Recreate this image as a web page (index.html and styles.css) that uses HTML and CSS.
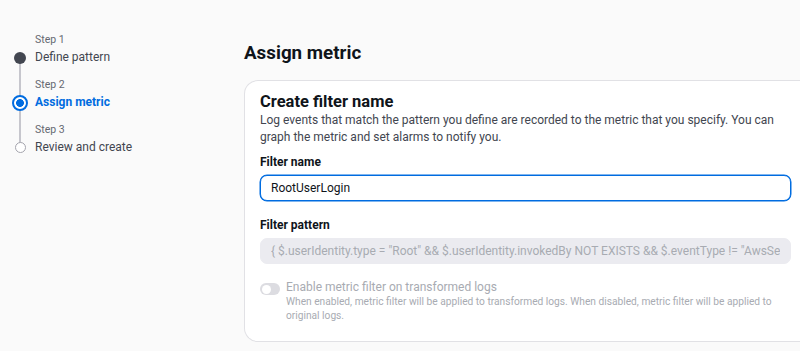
FILE: index.html
```html
<!DOCTYPE html>
<html lang="en">
<head>
    <meta charset="UTF-8">
    <title>Create metric filter</title>
    <link rel="stylesheet" href="styles.css">
</head>
<body>
    <div class="layout">
        <!-- Wizard steps -->
        <ul class="steps">
            <li class="step done">
                <span class="step-num">Step 1</span>
                <div class="step-row">
                    <span class="dot-wrap"><span class="dot"></span></span>
                    <span class="step-title">Define pattern</span>
                </div>
            </li>
            <li class="step active">
                <span class="step-num">Step 2</span>
                <div class="step-row">
                    <span class="dot-wrap"><span class="dot"></span></span>
                    <span class="step-title">Assign metric</span>
                </div>
            </li>
            <li class="step todo">
                <span class="step-num">Step 3</span>
                <div class="step-row">
                    <span class="dot-wrap"><span class="dot"></span></span>
                    <span class="step-title">Review and create</span>
                </div>
            </li>
        </ul>

        <div class="content">
            <h1>Assign metric</h1>

            <div class="card">
                <h2>Create filter name</h2>
                <p class="desc">Log events that match the pattern you define are recorded to the metric that you specify. You can graph the metric and set alarms to notify you.</p>

                <label for="filterName">Filter name</label>
                <input type="text" id="filterName" class="field focused" value="RootUserLogin">

                <label for="filterPattern">Filter pattern</label>
                <input type="text" id="filterPattern" class="field" disabled
                    value='{ $.userIdentity.type = "Root" &amp;&amp; $.userIdentity.invokedBy NOT EXISTS &amp;&amp; $.eventType != "AwsServiceEvent" }'>

                <div class="toggle-row">
                    <span class="toggle"><span class="knob"></span></span>
                    <div class="toggle-text">
                        <div class="toggle-label">Enable metric filter on transformed logs</div>
                        <div class="toggle-desc">When enabled, metric filter will be applied to transformed logs. When disabled, metric filter will be applied to original logs.</div>
                    </div>
                </div>
            </div>
        </div>
    </div>
</body>
</html>
```

FILE: styles.css
```css
body {
    font-family: Roboto, "Liberation Sans", sans-serif;
    background-color: #fafafa;
    color: #0f141a;
    margin: 0;
    overflow: hidden;
}

.layout {
    display: flex;
    height: 351px;
}

/* steps */
.steps {
    list-style: none;
    margin: 0;
    padding: 33px 0 0 12px;
    width: 232px;
    flex-shrink: 0;
}

.step {
    position: relative;
    height: 45px;
}

.step-num {
    display: block;
    font-size: 10.5px;
    line-height: 14px;
    color: #656871;
    padding-left: 23px;
    margin-bottom: 2px;
}

.step-row {
    display: flex;
    align-items: center;
    gap: 7px;
    height: 17px;
}

.step-title {
    font-size: 12px;
    line-height: 17px;
    color: #424650;
}

.dot-wrap {
    width: 16px;
    display: flex;
    justify-content: center;
    position: relative;
    z-index: 1;
}

.dot {
    width: 12px;
    height: 12px;
    border-radius: 50%;
    box-sizing: border-box;
}

.done .dot {
    background-color: #424650;
}

.active .dot {
    width: 16px;
    height: 16px;
    border: 2px solid #006ce0;
    background: radial-gradient(circle, #006ce0 0 3.6px, #ffffff 4.2px);
}

.active .step-title {
    color: #006ce0;
    font-weight: bold;
}

.todo .dot {
    width: 11px;
    height: 11px;
    border: 1.5px solid #a4a4ad;
    background-color: #ffffff;
}

/* connector between two steps */
.step:not(:last-child)::after {
    content: "";
    position: absolute;
    left: 7.25px;
    top: 30px;
    width: 1.5px;
    height: 36px;
    background-color: #c6c6cd;
}

/* main content */
.content {
    flex: 1;
    padding-top: 42px;
}

h1 {
    font-size: 18.8px;
    line-height: 22px;
    font-weight: bold;
    margin: 0 0 16px 0;
}

.card {
    background-color: #ffffff;
    border: 1px solid #e1e1e5;
    border-right: none;
    border-radius: 14px 0 0 14px;
    padding: 11px 9px 18px 15px;
}

h2 {
    font-size: 16.5px;
    line-height: 20px;
    font-weight: bold;
    margin: 0;
}

.desc {
    font-size: 12px;
    line-height: 17px;
    color: #424650;
    margin: 0 0 8px 0;
}

label {
    display: block;
    font-size: 12px;
    line-height: 17px;
    font-weight: bold;
    margin-bottom: 4px;
}

.field {
    display: block;
    width: 100%;
    box-sizing: border-box;
    height: 26px;
    font-family: inherit;
    font-size: 12px;
    padding: 0 10px;
    border: 1px solid #ebebf0;
    border-radius: 7px;
    margin-bottom: 16px;
    outline: none;
}

.field.focused {
    border: 1.5px solid #006ce0;
    box-shadow: 0 0 0 0.5px #006ce0;
    color: #0f141a;
}

.field:disabled {
    background-color: #ebebf0;
    color: #a8abb2;
    margin-bottom: 16px;
}

.toggle-row {
    display: flex;
    gap: 6px;
}

.toggle {
    width: 20px;
    height: 12px;
    border-radius: 6px;
    background-color: #dcdce1;
    position: relative;
    margin-top: 3px;
    flex-shrink: 0;
}

.knob {
    position: absolute;
    left: 1.5px;
    top: 1.5px;
    width: 9px;
    height: 9px;
    border-radius: 50%;
    background-color: #ffffff;
}

.toggle-text {
    flex: 1;
}

.toggle-label {
    font-size: 12px;
    line-height: 15px;
    color: #a8abb2;
}

.toggle-desc {
    font-size: 10.2px;
    line-height: 14px;
    color: #a8abb2;
}
```
